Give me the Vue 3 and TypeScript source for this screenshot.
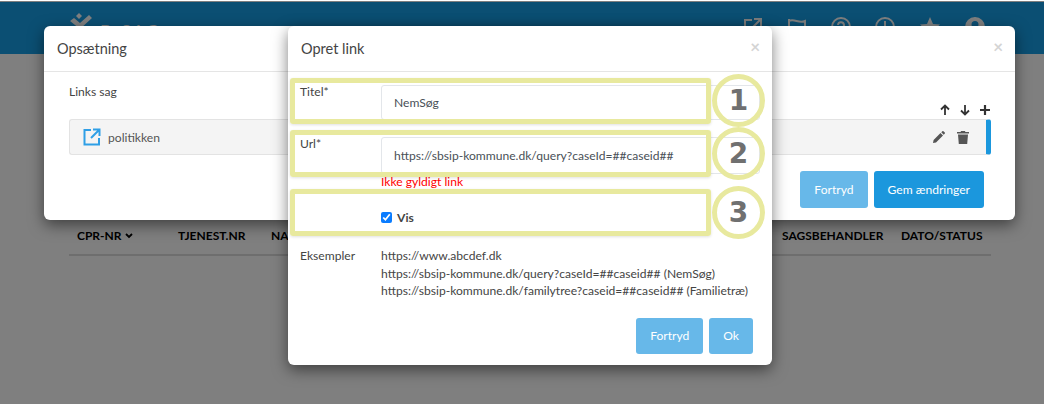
<template>
  <div class="page">
    <header class="topbar">
      <div class="brand">
        <svg class="logo" viewBox="0 0 24 20" width="24" height="20"><path d="M1 9l4-3 6 5 9-8 3 3-12 11z" fill="#fff" /><path d="M7 4l3-3 3 3-3 3z" fill="#fff" /></svg>
        <span class="brand-name">B-SAG</span>
      </div>
      <nav class="top-icons">
        <svg viewBox="0 0 20 20" width="20" height="20" class="ti" fill="none" stroke="#fff" stroke-width="2"><path d="M9 3H2v15h15v-7M11 2h7v7M18 2L9 11" /></svg>
        <svg viewBox="0 0 20 20" width="20" height="20" class="ti" fill="none" stroke="#fff" stroke-width="2"><path d="M2 2v16M2 4c5-3 10 3 16 0v10c-6 3-11-3-16 0" /></svg>
        <svg viewBox="0 0 20 20" width="20" height="20" class="ti" fill="none" stroke="#fff" stroke-width="2"><circle cx="10" cy="10" r="9" /><path d="M7 8a3 3 0 1 1 4 3l-1 1v2" /></svg>
        <svg viewBox="0 0 20 20" width="20" height="20" class="ti" fill="none" stroke="#fff" stroke-width="2"><circle cx="10" cy="10" r="9" /><path d="M10 4v7h5" /></svg>
        <svg viewBox="0 0 20 20" width="22" height="20" class="ti"><path d="M10 0l3 7 7 .6-5.3 4.7 1.6 7L10 15.6 3.700 19.300l1.600-7L0 7.600 7 7z" fill="#fff" /></svg>
        <svg viewBox="0 0 20 20" width="20" height="20" class="ti"><path fill-rule="evenodd" d="M10 0a10 10 0 1 1 0 20a10 10 0 0 1 0-20zM10 4a3.500 3.500 0 1 0 0 7a3.500 3.500 0 0 0 0-7z" fill="#fff" /></svg>
      </nav>
    </header>

    <div class="columns">
      <span v-for="c in columns" :key="c.label" class="col" :style="{ width: c.width + 'px' }">{{ c.label }}<svg v-if="c.sorted" class="caret" viewBox="0 0 8 6" width="8" height="6"><path d="M1 1l3 3 3-3" fill="none" stroke="#000" stroke-width="1.800" /></svg></span>
    </div>

    <div class="backdrop"></div>

    <section class="modal setup">
      <div class="modal-head"><h2>Opsætning</h2><span class="close">×</span></div>
      <div class="setup-body">
        <div class="list-top">
          <span>Links sag</span>
          <div class="tools">
            <svg viewBox="0 0 12 12" width="12" height="12"><path d="M6 11V2M2 5.500L6 1.500l4 4" fill="none" stroke="#333" stroke-width="1.800" /></svg>
            <svg viewBox="0 0 12 12" width="12" height="12"><path d="M6 1v9M2 6.500l4 4 4-4" fill="none" stroke="#333" stroke-width="1.800" /></svg>
            <svg viewBox="0 0 12 12" width="12" height="12"><path d="M6 1v10M1 6h10" fill="none" stroke="#333" stroke-width="2.200" /></svg>
          </div>
        </div>
        <div class="link-row">
          <svg class="ext" viewBox="0 0 18 18" width="18" height="18" fill="none" stroke="#2f9fe6" stroke-width="2"><path d="M8 2H1.500v14.500H16V10M10 1.500h6.500V8M16 2L8 10" /></svg>
          <span class="link-name">politikken</span>
          <svg class="edit" viewBox="0 0 12 12" width="12" height="12"><path d="M0 12l.6-3L7.500 2l2.500 2.500L3 11.400zM8.300 1.300L9.400.2a.7.7 0 0 1 1 0l1.400 1.400a.7.7 0 0 1 0 1L10.700 3.700z" fill="#555" /></svg>
          <svg class="trash" viewBox="0 0 12 14" width="12" height="14"><path d="M0 2h3.500l.6-1h3.800l.6 1H12v1.500H0zM1 4.500h10L10.200 14H1.800z" fill="#555" /></svg>
        </div>
        <div class="actions">
          <button class="btn light">Fortryd</button>
          <button class="btn solid">Gem ændringer</button>
        </div>
      </div>
    </section>

    <section class="modal create">
      <div class="modal-head"><h2>Opret link</h2><span class="close">×</span></div>
      <div class="form">
        <div class="field first">
          <label>Titel*</label>
          <div class="value">NemSøg</div>
        </div>
        <div class="field second">
          <label>Url*</label>
          <div class="value">https://sbsip-kommune.dk/query?caseId=##caseid##</div>
        </div>
        <div class="error">Ikke gyldigt link</div>
        <label class="show"><input type="checkbox" checked />Vis</label>
        <div class="examples">
          <span>Eksempler</span>
          <div>
            <div v-for="e in examples" :key="e">{{ e }}</div>
          </div>
        </div>
        <div class="actions bottom">
          <button class="btn light">Fortryd</button>
          <button class="btn light">Ok</button>
        </div>
      </div>
    </section>

    <template v-for="n in marks" :key="n.num">
      <div class="mark-box" :style="{ top: n.boxTop + 'px', height: n.boxHeight + 'px' }"></div>
      <div class="mark-num" :style="{ top: n.circleTop + 'px' }">{{ n.num }}</div>
    </template>
  </div>
</template>

<script setup lang="ts">
interface Column { label: string; width: number; sorted?: boolean }

const columns: Column[] = [
  { label: 'CPR-NR', width: 101, sorted: true },
  { label: 'TJENEST.NR', width: 93 },
  { label: 'NAVN', width: 511 },
  { label: 'SAGSBEHANDLER', width: 119 },
  { label: 'DATO/STATUS', width: 90 },
];

const examples = [
  'https://www.abcdef.dk',
  'https://sbsip-kommune.dk/query?caseId=##caseid## (NemSøg)',
  'https://sbsip-kommune.dk/familytree?caseid=##caseid## (Familietræ)',
];

const marks = [
  { num: 1, boxTop: 78, boxHeight: 46, circleTop: 74 },
  { num: 2, boxTop: 130, boxHeight: 47, circleTop: 127 },
  { num: 3, boxTop: 189, boxHeight: 47, circleTop: 186 },
];
</script>

<style>
html, body { margin: 0; background: #fff; }
</style>

<style scoped>
.page { position: relative; width: 1044px; height: 404px; overflow: hidden; background: #fff; font-family: Lato, "Open Sans", sans-serif; font-size: 12.100px; color: #444; }

.topbar { display: flex; justify-content: space-between; height: 52px; margin-top: 1px; padding: 10px 50px 0 69px; box-sizing: border-box; background: #169ee6; position: relative; top: 1px; }
.brand { display: flex; gap: 7px; }
.brand-name { color: #fff; font-size: 18px; line-height: 20px; margin-top: 9px; letter-spacing: 1.500px; }
.top-icons { display: flex; gap: 24px; margin-top: 5px; margin-right: 9px; }
.ti { flex: none; }

.columns { display: flex; margin: 174px 53px 0 69px; padding: 0 0 10px 8px; border-bottom: 2px solid #ddd; height: 16px; position: relative; top: 1px; }
.col { flex: none; color: #000; font-weight: 700; font-size: 12px; line-height: 16px; white-space: nowrap; }
.caret { margin-left: 3px; vertical-align: 1px; }

.backdrop { position: absolute; left: 0; right: 0; top: 1px; bottom: 0; background: rgba(0, 0, 0, 0.5); }

.modal { position: absolute; top: 26px; background: #fff; border-radius: 6px; box-shadow: 0 5px 15px rgba(0, 0, 0, 0.5); box-sizing: border-box; }
.setup { left: 44px; width: 971px; height: 194px; }
.create { left: 288px; width: 484px; height: 339px; }

.modal-head { display: flex; justify-content: space-between; align-items: center; height: 46px; padding: 0 12px 0 13px; box-sizing: border-box; border-bottom: 1px solid #e5e5e5; }
.modal-head h2 { margin: 0; font-size: 14.500px; font-weight: 400; color: #444; }
.close { font-size: 17px; font-weight: 700; color: #d4d4d4; margin-top: -4px; }

.setup-body { padding: 12px 24px 0 25px; }
.list-top { display: flex; justify-content: space-between; height: 35px; line-height: 16px; }
.tools { display: flex; gap: 8px; margin-top: 20px; }
.tools svg { flex: none; }
.link-row { display: flex; align-items: center; height: 36px; box-sizing: border-box; background: #f4f4f4; border: 1px solid #e3e3e3; border-right: 5px solid #1b97dd; border-radius: 3px; padding-left: 13px; }
.link-name { margin-left: 7px; color: #555; flex: 1; }
.edit { margin-right: 12px; }
.trash { margin-right: 17px; }

.actions { display: flex; justify-content: flex-end; gap: 6px; margin-top: 16px; padding-right: 7px; }
.btn { height: 37px; padding: 0 13px; border: 1px solid transparent; border-radius: 3px; color: #fff; font-family: inherit; font-size: 12.100px; }
.light { background: #67b8e9; }
.solid { background: #1b97dd; }

.form { padding: 13px 12px 0 12px; }
.field { display: grid; grid-template-columns: 81px 1fr; }
.field label { line-height: 16px; margin-top: -1px; color: #444; }
.first { height: 35px; margin-bottom: 17px; }
.second { height: 37px; }
.value { border: 1px solid #e3e6ea; border-radius: 3px; height: 100%; box-sizing: border-box; padding: 0 12px; display: flex; align-items: center; color: #495057; white-space: nowrap; }
.error { margin-left: 81px; color: #f00; line-height: 16px; }
.show { display: flex; align-items: center; margin: 19px 0 0 81px; font-weight: 700; height: 16px; color: #444; }
.show input { width: 11px; height: 11px; margin: 0 5px 0 0; accent-color: #0a7cff; }
.examples { display: grid; grid-template-columns: 81px 1fr; margin-top: 22px; line-height: 17.500px; white-space: nowrap; }
.bottom { margin-top: 18px; padding-right: 7px; }
.bottom .btn { height: 36px; }

.mark-box { position: absolute; left: 290px; width: 421px; box-sizing: border-box; border: 5px solid #e8e99e; border-radius: 3px; box-shadow: 0 1px 3px rgba(0, 0, 0, 0.12); }
.mark-num { position: absolute; left: 712px; width: 53px; height: 53px; box-sizing: border-box; border: 5px solid #e8e99e; border-radius: 50%; display: flex; align-items: center; justify-content: center; font-family: "DejaVu Sans", sans-serif; font-size: 28px; font-weight: 700; color: #707070; }
</style>
